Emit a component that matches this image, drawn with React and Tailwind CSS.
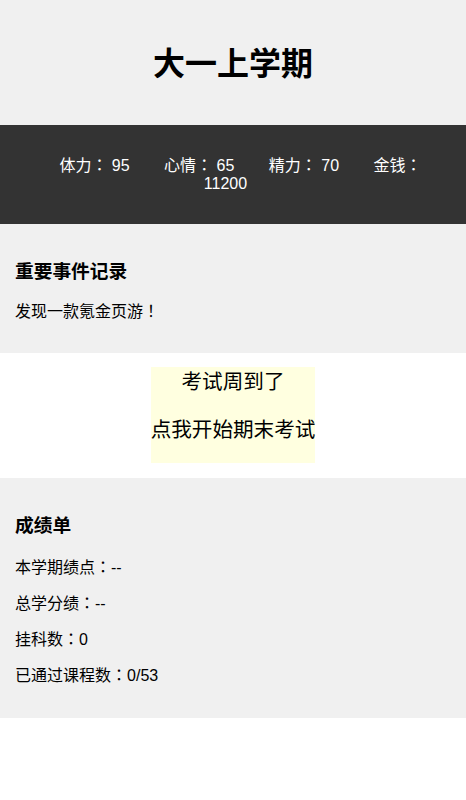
import React from "react";

const font = { fontFamily: '"Liberation Sans", Arial, "Noto Sans CJK SC", sans-serif' };

// full-width punctuation drawn centred in its cell; zero line-height keeps the line box unchanged
const Punct = ({ children }) => (
    <span className="font-['Noto_Sans_CJK_JP',sans-serif] leading-[0]">{children}</span>
);

const stats = [
    { label: "体力", value: 95 },
    { label: "心情", value: 65 },
    { label: "精力", value: 70 },
    { label: "金钱", value: 11200 },
];

const grades = [
    { label: "本学期绩点", value: "--" },
    { label: "总学分绩", value: "--" },
    { label: "挂科数", value: "0" },
    { label: "已通过课程数", value: "0/53" },
];

const App = () => {
    return (
        <div className="w-full bg-white text-black" style={font}>
            {/* Semester title */}
            <header className="bg-[#f0f0f0] pt-[46px] pb-[42px] text-center">
                <h1 className="text-[32px] leading-[37px] font-bold">大一上学期</h1>
            </header>

            {/* Attribute bar */}
            <div className="bg-[#333333] px-[20px] pt-[32px] pb-[31px] text-center text-white text-[16px] leading-[18px]">
                {stats.map((s, i) => (
                    <React.Fragment key={s.label}>
                        {i > 0 && " "}
                        <span className="mx-[15px]">
                            {s.label}<Punct>：</Punct> {s.value}
                        </span>
                    </React.Fragment>
                ))}
            </div>

            {/* Event log */}
            <section className="bg-[#f0f0f0] px-[15px] pt-[37px] pb-[32px]">
                <h3 className="text-[18.72px] leading-[22px] font-bold">重要事件记录</h3>
                <p className="mt-[20px] text-[16px] leading-[18px]">
                    发现一款氪金页游<Punct>！</Punct>
                </p>
            </section>

            {/* Exam prompt */}
            <div className="flex justify-center pt-[14px] pb-[15px]">
                <button className="bg-[#ffffe0] flex flex-col items-center pt-[1px] pb-[19px] gap-[20px] text-[20.6px] leading-[28px] cursor-pointer">
                    <span>考试周到了</span>
                    <span>点我开始期末考试</span>
                </button>
            </div>

            {/* Transcript */}
            <section className="bg-[#f0f0f0] px-[15px] pt-[37px] pb-[33px]">
                <h3 className="text-[18.72px] leading-[22px] font-bold">成绩单</h3>
                <div className="mt-[22px] flex flex-col gap-[18px] text-[16px] leading-[18px]">
                    {grades.map((g) => (
                        <p key={g.label}>
                            {g.label}<Punct>：</Punct>{g.value}
                        </p>
                    ))}
                </div>
            </section>
        </div>
    );
};

export default App;
